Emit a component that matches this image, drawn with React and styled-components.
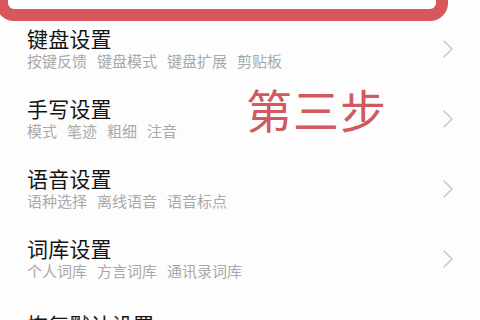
import React from 'react';
import styled, { createGlobalStyle } from 'styled-components';

const GlobalStyle = createGlobalStyle`
  html, body {
    margin: 0;
    padding: 0;
    background: #ffffff;
  }
  body {
    font-family: 'Noto Sans CJK SC', 'Noto Sans', sans-serif;
    overflow: hidden;
  }
`;

const Screen = styled.div`
  position: relative;
  width: 480px;
  height: 320px;
  overflow: hidden;
  background: #fdfdfd;
`;

const HighlightBox = styled.div`
  height: 50px;
  margin: -29px 0 0 -4px;
  width: 452px;
  box-sizing: border-box;
  border: 12px solid #d9565d;
  border-radius: 18px;
  background: #ffffff;
`;

const List = styled.div`
  display: flex;
  flex-direction: column;
`;

const Row = styled.div`
  display: flex;
  align-items: center;
  justify-content: space-between;
  padding: ${({ $gapTop }) => ($gapTop ? '11px' : '5px')} 27px 20px 27px;
`;

const Texts = styled.div`
  display: flex;
  flex-direction: column;
  gap: 1px;
`;

const Title = styled.div`
  font-size: 21px;
  line-height: 24px;
  color: #141414;
  letter-spacing: 0.2px;
`;

const Sub = styled.div`
  display: flex;
  gap: 10px;
  font-size: 15px;
  line-height: 20px;
  color: #a9a9a9;
`;

const Chevron = styled.svg`
  width: 12px;
  height: 20px;
  flex-shrink: 0;
  margin-right: -1px;
`;

const StepLabel = styled.div`
  position: absolute;
  left: 246px;
  top: 85px;
  font-size: 46px;
  line-height: 1;
  color: #cf5a60;
  letter-spacing: 1px;
`;

const rows = [
  { title: '键盘设置', subs: ['按键反馈', '键盘模式', '键盘扩展', '剪贴板'] },
  { title: '手写设置', subs: ['模式', '笔迹', '粗细', '注音'] },
  { title: '语音设置', subs: ['语种选择', '离线语音', '语音标点'] },
  { title: '词库设置', subs: ['个人词库', '方言词库', '通讯录词库'] },
];

const Arrow = () => (
  <Chevron viewBox="0 0 12 20">
    <polyline points="2,2 10,10 2,18" fill="none" stroke="#c9c9c9" strokeWidth="1.6" strokeLinecap="round" strokeLinejoin="round" />
  </Chevron>
);

export default function App() {
  return (
    <Screen>
      <GlobalStyle />
      <HighlightBox />
      <List>
        {rows.map((r) => (
          <Row key={r.title}>
            <Texts>
              <Title>{r.title}</Title>
              <Sub>
                {r.subs.map((s) => (
                  <span key={s}>{s}</span>
                ))}
              </Sub>
            </Texts>
            <Arrow />
          </Row>
        ))}
        <Row $gapTop>
          <Texts>
            <Title>恢复默认设置</Title>
          </Texts>
        </Row>
      </List>
      <StepLabel>第三步</StepLabel>
    </Screen>
  );
}
